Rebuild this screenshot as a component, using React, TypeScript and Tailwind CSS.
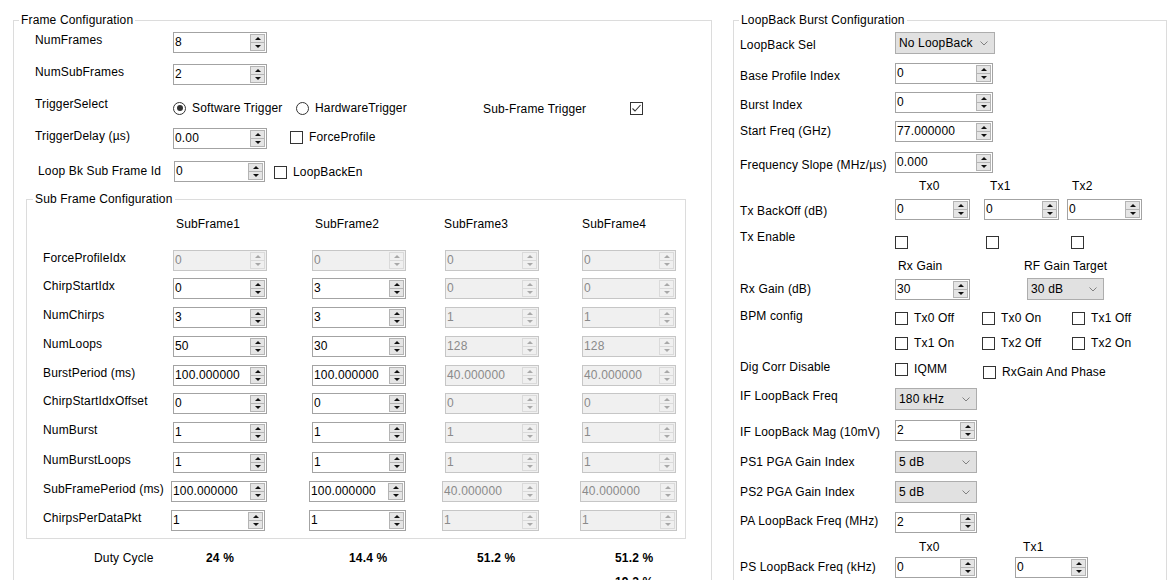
import React from "react";

function Spin({ v, w, dis = false }: { v: string; w: string; dis?: boolean }) {
  return (
    <div
      className={`${w} h-[21px] shrink-0 flex border ${
        dis ? "border-[#c6c6c6] bg-[#f0f0f0] text-[#8a8a8a]" : "border-[#a3a3a3] bg-white text-black"
      }`}
    >
      <div className="flex-1 pl-[1px] leading-[19px] overflow-hidden whitespace-nowrap">{v}</div>
      <div className="w-[15px] my-[1px] mr-[1px] flex flex-col">
        <div
          className={`h-[9px] flex items-center justify-center border ${
            dis ? "border-[#dadada] bg-[#f0f0f0]" : "border-[#b4b4b4] bg-[#e5e5e5]"
          }`}
        >
          <div
            className={`w-0 h-0 border-x-[3px] border-x-transparent border-b-[3px] ${
              dis ? "border-b-[#a8a8a8]" : "border-b-[#111111]"
            }`}
          />
        </div>
        <div
          className={`h-[8px] flex items-center justify-center border border-t-0 ${
            dis ? "border-[#dadada] bg-[#f0f0f0]" : "border-[#b4b4b4] bg-[#e5e5e5]"
          }`}
        >
          <div
            className={`w-0 h-0 border-x-[3px] border-x-transparent border-t-[3px] ${
              dis ? "border-t-[#a8a8a8]" : "border-t-[#111111]"
            }`}
          />
        </div>
      </div>
    </div>
  );
}

function Drop({ v, w }: { v: string; w: string }) {
  return (
    <div className={`${w} h-[22px] shrink-0 flex items-center border border-[#adadad] bg-[#e1e1e1] pl-[3px] pr-[6px]`}>
      <span className="flex-1 whitespace-nowrap">{v}</span>
      <svg width="8" height="5" viewBox="0 0 8 5">
        <polyline points="0.5,0.5 4,4 7.5,0.5" fill="none" stroke="#808080" strokeWidth="1" />
      </svg>
    </div>
  );
}

function CB({ checked = false }: { checked?: boolean }) {
  return (
    <div className="w-[13px] h-[13px] shrink-0 border border-[#333333] bg-white flex items-center justify-center">
      {checked && (
        <svg width="11" height="11" viewBox="0 0 11 11">
          <polyline points="1.5,5.5 4,8 9.5,2" fill="none" stroke="#333333" strokeWidth="1.1" />
        </svg>
      )}
    </div>
  );
}

function Radio({ on = false }: { on?: boolean }) {
  return (
    <div className="w-[13px] h-[13px] shrink-0 rounded-full border border-[#333333] bg-white flex items-center justify-center">
      {on && <div className="w-[6px] h-[6px] rounded-full bg-[#333333]" />}
    </div>
  );
}

type Cell = [string, boolean, string];
type SFRowT = { label: string; mt: string; lw: string; cells: Cell[] };

const sfRows: SFRowT[] = [
  {
    label: "ForceProfileIdx",
    mt: "mt-[19px]",
    lw: "w-[130px]",
    cells: [
      ["0", true, "w-[94px]"],
      ["0", true, "ml-[45px] w-[94px]"],
      ["0", true, "ml-[39px] w-[94px]"],
      ["0", true, "ml-[43px] w-[94px]"],
    ],
  },
  {
    label: "ChirpStartIdx",
    mt: "mt-[7px]",
    lw: "w-[130px]",
    cells: [
      ["0", false, "w-[94px]"],
      ["3", false, "ml-[45px] w-[94px]"],
      ["0", true, "ml-[39px] w-[94px]"],
      ["0", true, "ml-[43px] w-[94px]"],
    ],
  },
  {
    label: "NumChirps",
    mt: "mt-[8px]",
    lw: "w-[130px]",
    cells: [
      ["3", false, "w-[94px]"],
      ["3", false, "ml-[45px] w-[94px]"],
      ["1", true, "ml-[39px] w-[94px]"],
      ["1", true, "ml-[43px] w-[94px]"],
    ],
  },
  {
    label: "NumLoops",
    mt: "mt-[8px]",
    lw: "w-[130px]",
    cells: [
      ["50", false, "w-[94px]"],
      ["30", false, "ml-[45px] w-[94px]"],
      ["128", true, "ml-[39px] w-[94px]"],
      ["128", true, "ml-[43px] w-[94px]"],
    ],
  },
  {
    label: "BurstPeriod (ms)",
    mt: "mt-[8px]",
    lw: "w-[130px]",
    cells: [
      ["100.000000", false, "w-[94px]"],
      ["100.000000", false, "ml-[45px] w-[94px]"],
      ["40.000000", true, "ml-[39px] w-[94px]"],
      ["40.000000", true, "ml-[43px] w-[94px]"],
    ],
  },
  {
    label: "ChirpStartIdxOffset",
    mt: "mt-[7px]",
    lw: "w-[130px]",
    cells: [
      ["0", false, "w-[94px]"],
      ["0", false, "ml-[45px] w-[94px]"],
      ["0", true, "ml-[39px] w-[94px]"],
      ["0", true, "ml-[43px] w-[94px]"],
    ],
  },
  {
    label: "NumBurst",
    mt: "mt-[8px]",
    lw: "w-[130px]",
    cells: [
      ["1", false, "w-[94px]"],
      ["1", false, "ml-[45px] w-[94px]"],
      ["1", true, "ml-[39px] w-[94px]"],
      ["1", true, "ml-[43px] w-[94px]"],
    ],
  },
  {
    label: "NumBurstLoops",
    mt: "mt-[9px]",
    lw: "w-[130px]",
    cells: [
      ["1", false, "w-[94px]"],
      ["1", false, "ml-[45px] w-[94px]"],
      ["1", true, "ml-[39px] w-[94px]"],
      ["1", true, "ml-[43px] w-[94px]"],
    ],
  },
  {
    label: "SubFramePeriod (ms)",
    mt: "mt-[8px]",
    lw: "w-[128px]",
    cells: [
      ["100.000000", false, "w-[96px]"],
      ["100.000000", false, "ml-[42px] w-[96px]"],
      ["40.000000", true, "ml-[37px] w-[97px]"],
      ["40.000000", true, "ml-[41px] w-[97px]"],
    ],
  },
  {
    label: "ChirpsPerDataPkt",
    mt: "mt-[8px]",
    lw: "w-[128px]",
    cells: [
      ["1", false, "w-[94px]"],
      ["1", false, "ml-[44px] w-[97px]"],
      ["1", true, "ml-[36px] w-[97px]"],
      ["1", true, "ml-[41px] w-[97px]"],
    ],
  },
];

export default function App() {
  return (
    <div className="flex items-start w-[1175px] h-[580px] overflow-hidden bg-white text-[12px] leading-[14px] tracking-[0.15px] text-black font-['Liberation_Sans',Arial,sans-serif] whitespace-nowrap">
      {/* Frame Configuration */}
      <div className="ml-[13px] mt-[20px] w-[699px] h-[640px] shrink-0 border border-[#dcdcdc]">
        <div className="-mt-[8px] ml-[5px] px-[2px] w-fit h-[14px] bg-white">Frame Configuration</div>
        <div className="pl-[21px]">
          <div className="mt-[5px] flex items-start h-[21px]">
            <div className="w-[138px] mt-[1px]">NumFrames</div>
            <Spin v="8" w="w-[94px]" />
          </div>
          <div className="mt-[11px] flex items-start h-[21px]">
            <div className="w-[138px] mt-[1px]">NumSubFrames</div>
            <Spin v="2" w="w-[94px]" />
          </div>
          <div className="mt-[12px] flex items-start h-[20px]">
            <div className="w-[138px]">TriggerSelect</div>
            <div className="w-[123px] mt-[4px] h-[14px] flex items-center gap-[6px]">
              <Radio on />
              <span>Software Trigger</span>
            </div>
            <div className="w-[187px] mt-[4px] h-[14px] flex items-center gap-[6px]">
              <Radio />
              <span>HardwareTrigger</span>
            </div>
            <div className="w-[147px] mt-[5px]">Sub-Frame Trigger</div>
            <div className="mt-[5px]">
              <CB checked />
            </div>
          </div>
          <div className="mt-[11px] flex items-start h-[21px]">
            <div className="w-[138px] mt-[1px]">TriggerDelay (µs)</div>
            <Spin v="0.00" w="w-[94px]" />
            <div className="ml-[23px] mt-[2px] h-[14px] flex items-center gap-[6px]">
              <CB />
              <span>ForceProfile</span>
            </div>
          </div>
          <div className="mt-[12px] flex items-start h-[21px] pl-[3px]">
            <div className="w-[136px] mt-[3px]">Loop Bk Sub Frame Id</div>
            <Spin v="0" w="w-[91px]" />
            <div className="ml-[9px] mt-[4px] h-[14px] flex items-center gap-[6px]">
              <CB />
              <span>LoopBackEn</span>
            </div>
          </div>
        </div>

        {/* Sub Frame Configuration */}
        <div className="ml-[12px] mt-[17px] w-[660px] h-[340px] border border-[#dcdcdc]">
          <div className="-mt-[8px] ml-[6px] px-[2px] w-fit h-[14px] bg-white">Sub Frame Configuration</div>
          <div className="mt-[11px] h-[14px] flex pl-[149px]">
            <div className="w-[139px]">SubFrame1</div>
            <div className="w-[129px]">SubFrame2</div>
            <div className="w-[138px]">SubFrame3</div>
            <div>SubFrame4</div>
          </div>
          <div className="pl-[16px]">
            {sfRows.map((r) => (
              <div key={r.label} className={`${r.mt} flex items-start h-[21px]`}>
                <div className={`${r.lw} mt-[1px]`}>{r.label}</div>
                {r.cells.map((c, i) => (
                  <Spin key={i} v={c[0]} dis={c[1]} w={c[2]} />
                ))}
              </div>
            ))}
          </div>
        </div>

        <div className="mt-[12px] h-[14px] flex pl-[80px]">
          <div className="w-[112px]">Duty Cycle</div>
          <div className="w-[143px] font-bold">24 %</div>
          <div className="w-[128px] font-bold">14.4 %</div>
          <div className="w-[138px] font-bold">51.2 %</div>
          <div className="font-bold">51.2 %</div>
        </div>
        <div className="mt-[10px] h-[14px] flex pl-[601px]">
          <div className="font-bold">19.2 %</div>
        </div>
      </div>

      {/* LoopBack Burst Configuration */}
      <div className="ml-[21px] mt-[20px] w-[434px] h-[640px] shrink-0 border border-[#dcdcdc]">
        <div className="-mt-[8px] ml-[5px] px-[2px] w-fit h-[14px] bg-white">LoopBack Burst Configuration</div>
        <div className="pl-[6px]">
          <div className="mt-[5px] flex items-start h-[22px]">
            <div className="w-[155px] mt-[6px]">LoopBack Sel</div>
            <Drop v="No LoopBack" w="w-[100px]" />
          </div>
          <div className="mt-[9px] flex items-start h-[21px]">
            <div className="w-[155px] mt-[6px]">Base Profile Index</div>
            <Spin v="0" w="w-[98px]" />
          </div>
          <div className="mt-[8px] flex items-start h-[21px]">
            <div className="w-[155px] mt-[6px]">Burst Index</div>
            <Spin v="0" w="w-[98px]" />
          </div>
          <div className="mt-[8px] flex items-start h-[21px]">
            <div className="w-[155px] mt-[3px]">Start Freq (GHz)</div>
            <Spin v="77.000000" w="w-[98px]" />
          </div>
          <div className="mt-[10px] flex items-start h-[21px]">
            <div className="w-[155px] mt-[6px]">Frequency Slope (MHz/µs)</div>
            <Spin v="0.000" w="w-[98px]" />
          </div>
          <div className="mt-[6px] h-[14px] flex">
            <div className="w-[179px]" />
            <div className="w-[71px]">Tx0</div>
            <div className="w-[82px]">Tx1</div>
            <div>Tx2</div>
          </div>
          <div className="mt-[6px] flex items-start h-[21px]">
            <div className="w-[155px] mt-[5px]">Tx BackOff (dB)</div>
            <Spin v="0" w="w-[75px]" />
            <Spin v="0" w="ml-[14px] w-[75px]" />
            <Spin v="0" w="ml-[8px] w-[75px]" />
          </div>
          <div className="mt-[10px] flex items-start h-[19px]">
            <div className="w-[155px]">Tx Enable</div>
            <div className="mt-[6px] flex">
              <CB />
              <div className="ml-[78px]">
                <CB />
              </div>
              <div className="ml-[72px]">
                <CB />
              </div>
            </div>
          </div>
          <div className="mt-[10px] h-[14px] flex">
            <div className="w-[158px]" />
            <div className="w-[126px]">Rx Gain</div>
            <div>RF Gain Target</div>
          </div>
          <div className="mt-[5px] flex items-start h-[22px]">
            <div className="w-[155px] mt-[4px]">Rx Gain (dB)</div>
            <div className="mt-[1px]">
              <Spin v="30" w="w-[75px]" />
            </div>
            <div className="ml-[57px]">
              <Drop v="30 dB" w="w-[77px]" />
            </div>
          </div>
          <div className="mt-[9px] flex items-start h-[41px]">
            <div className="w-[155px]">BPM config</div>
            <div className="flex flex-col">
              <div className="mt-[2px] flex">
                <div className="w-[87px] h-[14px] flex items-center gap-[6px]">
                  <CB />
                  <span>Tx0 Off</span>
                </div>
                <div className="w-[90px] h-[14px] flex items-center gap-[6px]">
                  <CB />
                  <span>Tx0 On</span>
                </div>
                <div className="h-[14px] flex items-center gap-[6px]">
                  <CB />
                  <span>Tx1 Off</span>
                </div>
              </div>
              <div className="mt-[11px] flex">
                <div className="w-[87px] h-[14px] flex items-center gap-[6px]">
                  <CB />
                  <span>Tx1 On</span>
                </div>
                <div className="w-[90px] h-[14px] flex items-center gap-[6px]">
                  <CB />
                  <span>Tx2 Off</span>
                </div>
                <div className="h-[14px] flex items-center gap-[6px]">
                  <CB />
                  <span>Tx2 On</span>
                </div>
              </div>
            </div>
          </div>
          <div className="mt-[10px] flex items-start h-[18px]">
            <div className="w-[155px]">Dig Corr Disable</div>
            <div className="w-[88px] mt-[2px] h-[14px] flex items-center gap-[6px]">
              <CB />
              <span>IQMM</span>
            </div>
            <div className="mt-[5px] h-[14px] flex items-center gap-[6px]">
              <CB />
              <span>RxGain And Phase</span>
            </div>
          </div>
          <div className="mt-[10px] flex items-start h-[22px]">
            <div className="w-[155px] mt-[1px]">IF LoopBack Freq</div>
            <Drop v="180 kHz" w="w-[82px]" />
          </div>
          <div className="mt-[10px] flex items-start h-[21px]">
            <div className="w-[155px] mt-[5px]">IF LoopBack Mag (10mV)</div>
            <Spin v="2" w="w-[82px]" />
          </div>
          <div className="mt-[10px] flex items-start h-[22px]">
            <div className="w-[155px] mt-[4px]">PS1 PGA Gain Index</div>
            <Drop v="5 dB" w="w-[82px]" />
          </div>
          <div className="mt-[8px] flex items-start h-[22px]">
            <div className="w-[155px] mt-[4px]">PS2 PGA Gain Index</div>
            <Drop v="5 dB" w="w-[82px]" />
          </div>
          <div className="mt-[9px] flex items-start h-[21px]">
            <div className="w-[155px] mt-[2px]">PA LoopBack Freq (MHz)</div>
            <Spin v="2" w="w-[82px]" />
          </div>
          <div className="mt-[7px] h-[14px] flex">
            <div className="w-[179px]" />
            <div className="w-[104px]">Tx0</div>
            <div>Tx1</div>
          </div>
          <div className="mt-[3px] flex items-start h-[21px]">
            <div className="w-[155px] mt-[3px]">PS LoopBack Freq (kHz)</div>
            <Spin v="0" w="w-[82px]" />
            <Spin v="0" w="ml-[38px] w-[73px]" />
          </div>
        </div>
      </div>
    </div>
  );
}
